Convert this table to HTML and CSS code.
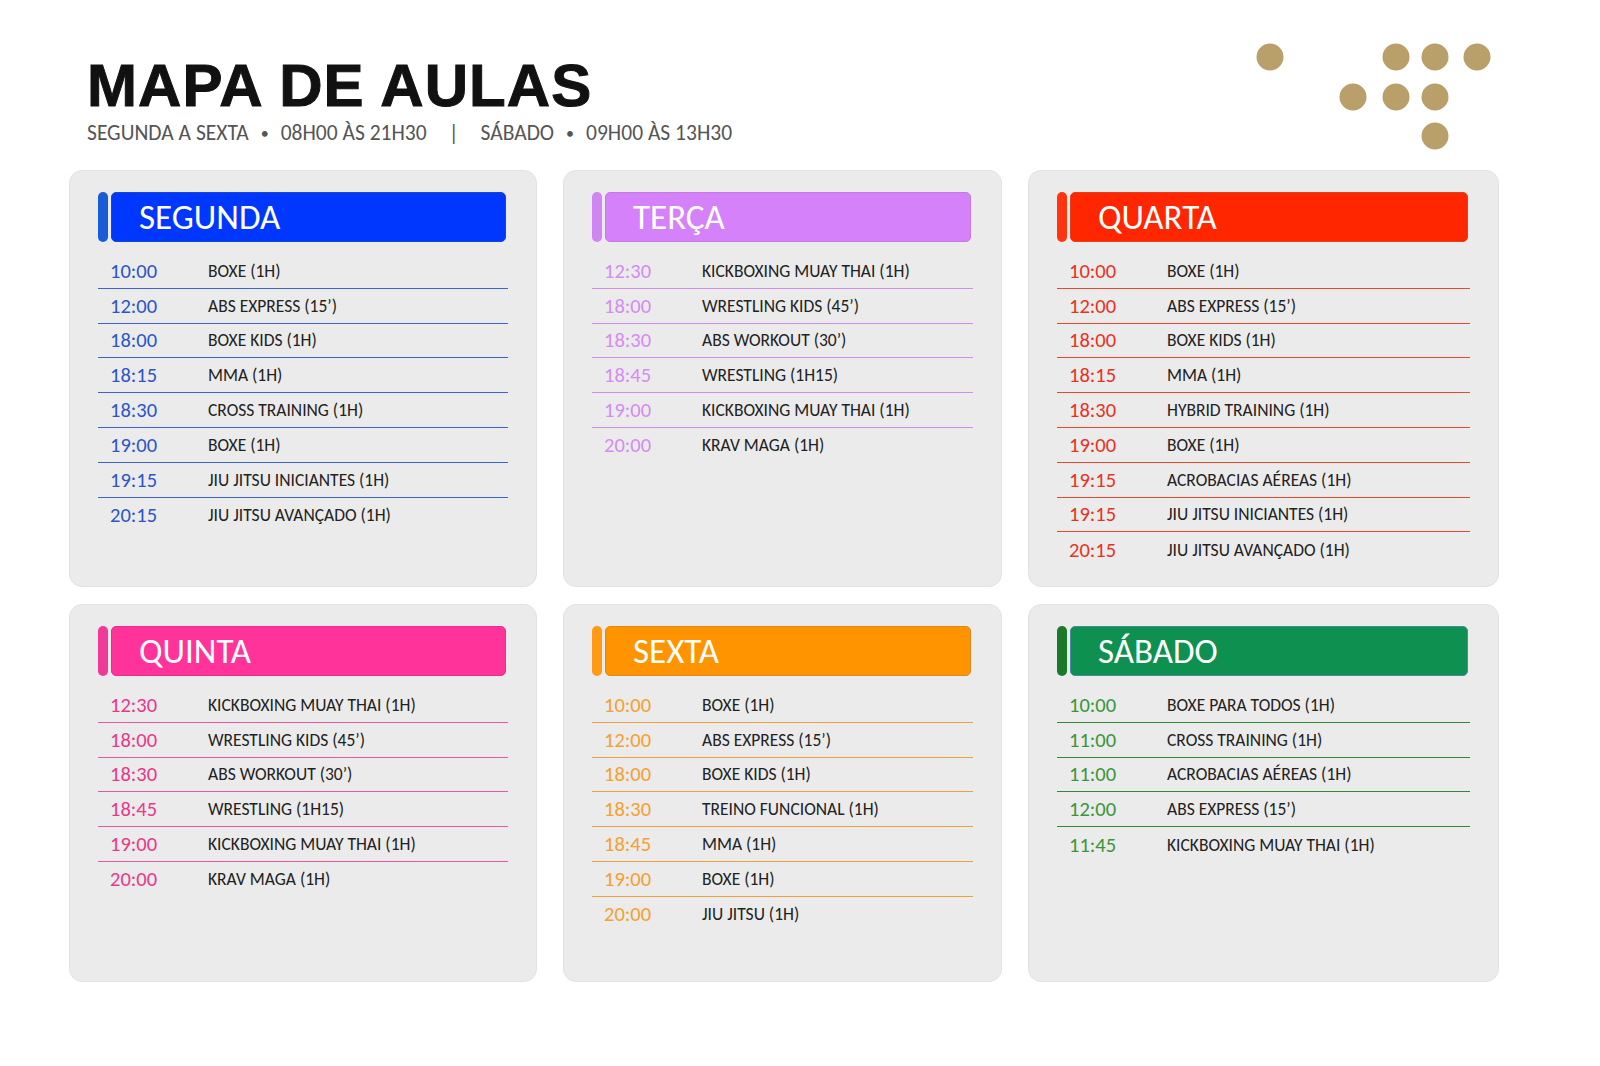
FILE: index.html
```html
<!DOCTYPE html>
<html lang="pt">
<head>
<meta charset="utf-8">
<title>Mapa de Aulas</title>
<link rel="stylesheet" href="styles.css">
</head>
<body>
<header class="top">
  <div class="titles">
    <h1 class="title">MAPA DE AULAS</h1>
    <p class="sub"><span>SEGUNDA A SEXTA</span><span class="dot">•</span><span>08H00 ÀS 21H30</span><span class="bar-sep">|</span><span>SÁBADO</span><span class="dot">•</span><span>09H00 ÀS 13H30</span></p>
  </div>
  <svg class="dots" width="236" height="108" viewBox="0 0 236 108" aria-hidden="true">
    <g fill="#b9a06b">
      <circle cx="14" cy="14" r="13.5"/>
      <circle cx="140" cy="14" r="13.5"/>
      <circle cx="179" cy="14" r="13.5"/>
      <circle cx="221" cy="14" r="13.5"/>
      <circle cx="97" cy="54" r="13.5"/>
      <circle cx="140" cy="54" r="13.5"/>
      <circle cx="179" cy="54" r="13.5"/>
      <circle cx="179" cy="93" r="13.5"/>
    </g>
  </svg>
</header>

<main class="grid">
  <section class="card seg">
    <div class="head"><span class="tab"></span><h2 class="name">SEGUNDA</h2></div>
    <ul class="rows">
      <li><span class="time">10:00</span><span class="cls">BOXE (1H)</span></li>
      <li><span class="time">12:00</span><span class="cls">ABS EXPRESS (15’)</span></li>
      <li><span class="time">18:00</span><span class="cls">BOXE KIDS (1H)</span></li>
      <li><span class="time">18:15</span><span class="cls">MMA (1H)</span></li>
      <li><span class="time">18:30</span><span class="cls">CROSS TRAINING (1H)</span></li>
      <li><span class="time">19:00</span><span class="cls">BOXE (1H)</span></li>
      <li><span class="time">19:15</span><span class="cls">JIU JITSU INICIANTES (1H)</span></li>
      <li><span class="time">20:15</span><span class="cls">JIU JITSU AVANÇADO (1H)</span></li>
    </ul>
  </section>

  <section class="card ter">
    <div class="head"><span class="tab"></span><h2 class="name">TERÇA</h2></div>
    <ul class="rows">
      <li><span class="time">12:30</span><span class="cls">KICKBOXING MUAY THAI (1H)</span></li>
      <li><span class="time">18:00</span><span class="cls">WRESTLING KIDS (45’)</span></li>
      <li><span class="time">18:30</span><span class="cls">ABS WORKOUT (30’)</span></li>
      <li><span class="time">18:45</span><span class="cls">WRESTLING (1H15)</span></li>
      <li><span class="time">19:00</span><span class="cls">KICKBOXING MUAY THAI (1H)</span></li>
      <li><span class="time">20:00</span><span class="cls">KRAV MAGA (1H)</span></li>
    </ul>
  </section>

  <section class="card qua">
    <div class="head"><span class="tab"></span><h2 class="name">QUARTA</h2></div>
    <ul class="rows">
      <li><span class="time">10:00</span><span class="cls">BOXE (1H)</span></li>
      <li><span class="time">12:00</span><span class="cls">ABS EXPRESS (15’)</span></li>
      <li><span class="time">18:00</span><span class="cls">BOXE KIDS (1H)</span></li>
      <li><span class="time">18:15</span><span class="cls">MMA (1H)</span></li>
      <li><span class="time">18:30</span><span class="cls">HYBRID TRAINING (1H)</span></li>
      <li><span class="time">19:00</span><span class="cls">BOXE (1H)</span></li>
      <li><span class="time">19:15</span><span class="cls">ACROBACIAS AÉREAS (1H)</span></li>
      <li><span class="time">19:15</span><span class="cls">JIU JITSU INICIANTES (1H)</span></li>
      <li><span class="time">20:15</span><span class="cls">JIU JITSU AVANÇADO (1H)</span></li>
    </ul>
  </section>

  <section class="card qui">
    <div class="head"><span class="tab"></span><h2 class="name">QUINTA</h2></div>
    <ul class="rows">
      <li><span class="time">12:30</span><span class="cls">KICKBOXING MUAY THAI (1H)</span></li>
      <li><span class="time">18:00</span><span class="cls">WRESTLING KIDS (45’)</span></li>
      <li><span class="time">18:30</span><span class="cls">ABS WORKOUT (30’)</span></li>
      <li><span class="time">18:45</span><span class="cls">WRESTLING (1H15)</span></li>
      <li><span class="time">19:00</span><span class="cls">KICKBOXING MUAY THAI (1H)</span></li>
      <li><span class="time">20:00</span><span class="cls">KRAV MAGA (1H)</span></li>
    </ul>
  </section>

  <section class="card sex">
    <div class="head"><span class="tab"></span><h2 class="name">SEXTA</h2></div>
    <ul class="rows">
      <li><span class="time">10:00</span><span class="cls">BOXE (1H)</span></li>
      <li><span class="time">12:00</span><span class="cls">ABS EXPRESS (15’)</span></li>
      <li><span class="time">18:00</span><span class="cls">BOXE KIDS (1H)</span></li>
      <li><span class="time">18:30</span><span class="cls">TREINO FUNCIONAL (1H)</span></li>
      <li><span class="time">18:45</span><span class="cls">MMA (1H)</span></li>
      <li><span class="time">19:00</span><span class="cls">BOXE (1H)</span></li>
      <li><span class="time">20:00</span><span class="cls">JIU JITSU (1H)</span></li>
    </ul>
  </section>

  <section class="card sab">
    <div class="head"><span class="tab"></span><h2 class="name">SÁBADO</h2></div>
    <ul class="rows">
      <li><span class="time">10:00</span><span class="cls">BOXE PARA TODOS (1H)</span></li>
      <li><span class="time">11:00</span><span class="cls">CROSS TRAINING (1H)</span></li>
      <li><span class="time">11:00</span><span class="cls">ACROBACIAS AÉREAS (1H)</span></li>
      <li><span class="time">12:00</span><span class="cls">ABS EXPRESS (15’)</span></li>
      <li><span class="time">11:45</span><span class="cls">KICKBOXING MUAY THAI (1H)</span></li>
    </ul>
  </section>
</main>
</body>
</html>
```

FILE: styles.css
```css
* { box-sizing: border-box; }

html, body {
  margin: 0;
  padding: 0;
  background: #ffffff;
}

body {
  width: 1600px;
  height: 1066px;
  font-family: "Carlito", "Lato", "Open Sans", sans-serif;
  color: #222;
  overflow: hidden;
}

.top {
  display: flex;
  justify-content: space-between;
  align-items: flex-start;
  padding: 43px 108px 0 87px;
  height: 170px;
}

.titles {
  padding-top: 13px;
}

.title {
  margin: 0;
  font-family: "Liberation Sans", Arial, sans-serif;
  font-weight: 700;
  font-size: 60px;
  line-height: 60px;
  color: #111;
  letter-spacing: 1.1px;
  -webkit-text-stroke: 1px #111;
}

.sub {
  margin: 5px 0 0;
  font-size: 21.5px;
  line-height: 25px;
  color: #555;
  display: flex;
  align-items: center;
}

.sub .dot {
  margin: 0 12px;
  font-size: 16px;
}

.sub .bar-sep {
  margin: 0 22px;
}

.dots {
  display: block;
}

.grid {
  display: grid;
  grid-template-columns: 468px 439px 471px;
  grid-template-rows: 417px 378px;
  column-gap: 26px;
  row-gap: 17px;
  margin-left: 69px;
}

.card {
  background: #ebebeb;
  border: 1px solid #e2e2e2;
  border-radius: 13px;
  padding: 21px 28px;
}

.head {
  display: flex;
  gap: 3px;
  height: 50px;
  margin-right: 2px;
}

.tab {
  width: 10px;
  border-radius: 5px;
  background: var(--tab);
}

.name {
  flex: 1;
  margin: 0;
  background: var(--bar);
  border: 1px solid var(--barline);
  border-radius: 5px;
  padding-left: 27px;
  color: #fff;
  font-weight: 300;
  font-size: 35px;
  line-height: 48px;
}

.rows {
  list-style: none;
  margin: 12px 0 0;
  padding: 0;
}

.rows li {
  display: flex;
  align-items: center;
  height: 34.8px;
  border-bottom: 1.5px solid var(--line);
  padding-left: 12px;
}

.rows li:last-child {
  border-bottom: none;
}

.time {
  width: 98px;
  font-size: 20.5px;
  color: var(--time);
}

.cls {
  font-size: 17.5px;
  color: #222;
}

.seg { --bar: #0037ff; --barline: #1b45d0; --tab: #1a5cd8; --time: #2a56c8; --line: #3d62d8; }
.ter { --bar: #d581fa; --barline: #c479e4; --tab: #cf85f2; --time: #d48cf2; --line: #d08ef0; }
.qua { --bar: #ff2600; --barline: #e2401e; --tab: #ff3512; --time: #e8321e; --line: #e8482e; }
.qui { --bar: #ff3399; --barline: #e4308a; --tab: #f03a98; --time: #e8388a; --line: #e85aa0; }
.sex { --bar: #ff9400; --barline: #d88a20; --tab: #ff9a12; --time: #f5a030; --line: #f0a040; }
.sab { --bar: #0e9150; --barline: #4a8aa0; --tab: #1a7a2a; --time: #3a963a; --line: #2f8a34; }
```
